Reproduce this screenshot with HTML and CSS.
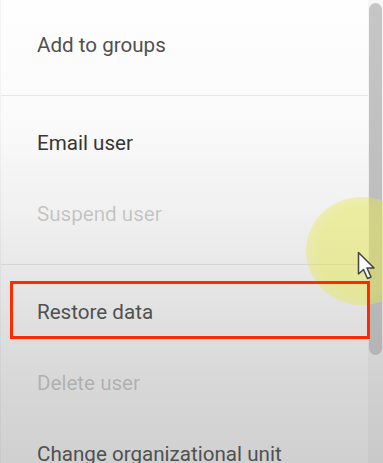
FILE: index.html
```html
<!DOCTYPE html>
<html lang="en">
<head>
  <meta charset="UTF-8" />
  <title>User actions</title>
  <link rel="stylesheet" href="styles.css">
</head>
<body>
  <div class="screen">
    <div class="menu">
      <div class="group first">
        <div class="item">Add to groups</div>
      </div>
      <div class="group">
        <div class="item dark">Email user</div>
        <div class="item disabled">Suspend user</div>
      </div>
      <div class="group">
        <div class="item">Restore data</div>
        <div class="item disabled">Delete user</div>
        <div class="item">Change organizational unit</div>
      </div>
    </div>
    <div class="scrollbar">
      <div class="thumb"></div>
    </div>

    <div class="highlight"></div>
    <div class="cursor">
      <svg width="22" height="30" viewBox="0 0 22 30">
        <path d="M1.5 1.5 L1.5 23 L6.5 18.5 L10.5 27.5 L14 26 L10 17 L17 17 Z"
              fill="#fafafa" stroke="#444" stroke-width="1.5" stroke-linejoin="round" />
      </svg>
    </div>
    <div class="callout"></div>
  </div>
</body>
</html>
```

FILE: styles.css
```css
body { margin: 0; overflow: hidden; font-family: Roboto, "Liberation Sans", sans-serif; }

.screen {
  position: relative; display: flex;
  width: 383px; height: 463px; overflow: hidden;
  background: linear-gradient(#fefefe 0%, #fbfbfb 25%, #f1f1f1 45%, #e3e3e3 65%, #d8d8d8 82%, #d0d0d0 100%);
}

.menu { flex: 1; margin-top: -2px; border-left: 1px solid rgba(0,0,0,0.04); }
.group { padding: 12px 0 14px; border-bottom: 1px solid rgba(0,0,0,0.08); }
.group:last-child { border-bottom: none; }
.item {
  height: 71px; line-height: 71px; padding-left: 36px;
  font-size: 20.6px; color: #505050; white-space: nowrap;
}
.item.dark { color: #363636; }
.item.disabled { color: rgba(0,0,0,0.2); }

.scrollbar { width: 15px; background: rgba(0,0,0,0.03); }
.thumb {
  margin: 3px 1px 0 1px; height: 352px; border-radius: 7px;
  background: linear-gradient(#c6c6c6, #bcbcbc 70%, #b4b4b4);
}

/* cursor highlight from the screen recording */
.highlight {
  position: absolute; left: 306px; top: 197px; width: 112px; height: 108px;
  border-radius: 50%;
  background: radial-gradient(circle, rgba(230,232,80,0.5) 55%, rgba(230,232,80,0.32) 82%, rgba(230,232,80,0) 100%);
}
.cursor { position: absolute; left: 357px; top: 251px; }

.callout {
  position: absolute; left: 10px; top: 281px; width: 360px; height: 58px;
  box-sizing: border-box; border: 3px solid #ff2a00;
}
```
